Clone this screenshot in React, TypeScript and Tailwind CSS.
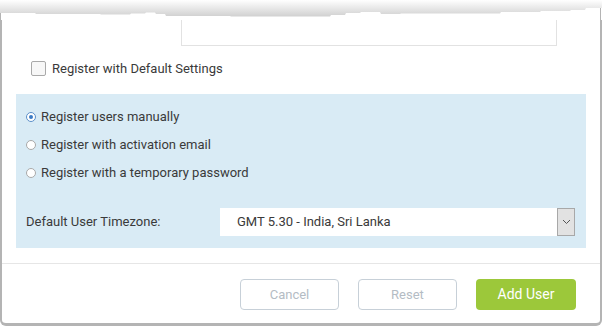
import { useState } from "react";

const options = [
  "Register users manually",
  "Register with activation email",
  "Register with a temporary password",
];

function TornEdge() {
  // jagged top edge of the cropped dialog
  const pts = [
    [0, 13], [35, 13], [36, 14], [100, 14], [101, 14.5], [130, 14.5], [131, 13.5],
    [145, 13.5], [146, 12.5], [155, 12.5], [156, 14], [165, 14], [166, 16],
    [230, 16], [231, 16.5], [330, 16.5], [331, 15], [345, 15], [346, 13], [360, 13],
    [361, 12], [380, 12], [381, 14], [400, 14], [401, 13.5], [500, 13.5], [501, 12],
    [540, 12], [541, 11], [570, 11], [571, 10], [585, 10], [586, 8], [602, 8],
  ];
  const d = "M" + pts.map((p) => p.join(",")).join(" L") + " L602,20 L0,20 Z";
  return (
    <svg className="absolute left-0 top-0" width="602" height="20" viewBox="0 0 602 20">
      <defs>
        <linearGradient id="torn" x1="0" y1="0" x2="0" y2="1">
          <stop offset="0" stopColor="#ffffff" />
          <stop offset="0.85" stopColor="#cfcfcf" />
        </linearGradient>
      </defs>
      <rect x="0" y="0" width="602" height="20" fill="url(#torn)" />
      <path d={d} fill="#ffffff" />
      <line x1="0.5" y1="13" x2="0.5" y2="20" stroke="#b4b4b4" />
      <line x1="600.5" y1="8" x2="600.5" y2="20" stroke="#b4b4b4" />
    </svg>
  );
}

function Radio({ checked }: { checked: boolean }) {
  return (
    <span
      className={`flex h-[10px] w-[10px] items-center justify-center rounded-full border bg-white ${
        checked ? "border-[#5b8fc9]" : "border-[#a9a9a9]"
      }`}
    >
      {checked && <span className="h-[4px] w-[4px] rounded-full bg-[#3d7bc4]" />}
    </span>
  );
}

export default function App() {
  const [mode, setMode] = useState(0);

  return (
    <div className="relative h-[327px] w-[602px] overflow-hidden bg-white font-['Roboto',sans-serif] text-[13px] text-[#3a3a3a]">
      <div className="h-[326px] w-[602px] rounded-b-[6px] border-x-2 border-b-[3px] border-[#b4b4b4] bg-white">
        <div className="ml-[179px] h-[46px] w-[376px] border border-[#e2e2e2]" />

        <label className="mt-[15px] flex h-[15px] items-center pl-[29px]">
          <span className="h-[15px] w-[15px] rounded-[2px] border border-[#a9a9a9] bg-[#f7f7f7]" />
          <span className="ml-[6px]">Register with Default Settings</span>
        </label>

        <div className="ml-[14px] mt-[18px] h-[154px] w-[570px] bg-[#d9ebf5] pl-[10px] pt-[9px]">
          {options.map((o, i) => (
            <div key={o} className="flex h-[28px] cursor-pointer items-center" onClick={() => setMode(i)}>
              <Radio checked={mode === i} />
              <span className="ml-[5px]">{o}</span>
            </div>
          ))}
          <div className="mt-[21px] flex h-[28px] items-center">
            <span className="w-[194px]">Default User Timezone:</span>
            <div className="flex h-[28px] w-[355px] items-center bg-white">
              <span className="flex-1 pl-[17px]">GMT 5.30 - India, Sri Lanka</span>
              <span className="flex h-[28px] w-[18px] items-center justify-center border border-[#a8a8a8] bg-[#e2e2e2]">
                <svg width="9" height="6" viewBox="0 0 9 6">
                  <path d="M1 1 L4.5 4.5 L8 1" fill="none" stroke="#555" strokeWidth="1" />
                </svg>
              </span>
            </div>
          </div>
        </div>

        <div className="mt-[15px] border-t border-[#e6e6e6]" />

        <div className="mt-[15px] flex gap-[19px] pl-[238px]">
          <button className="h-[31px] w-[99px] rounded-[4px] border border-[#c7d0d8] bg-white text-[#b4bcc4]">
            Cancel
          </button>
          <button className="h-[31px] w-[99px] rounded-[4px] border border-[#c7d0d8] bg-white text-[#b4bcc4]">
            Reset
          </button>
          <button className="h-[31px] w-[100px] rounded-[4px] bg-[#9cc83a] text-[14px] text-white">
            Add User
          </button>
        </div>
      </div>
      <TornEdge />
    </div>
  );
}
